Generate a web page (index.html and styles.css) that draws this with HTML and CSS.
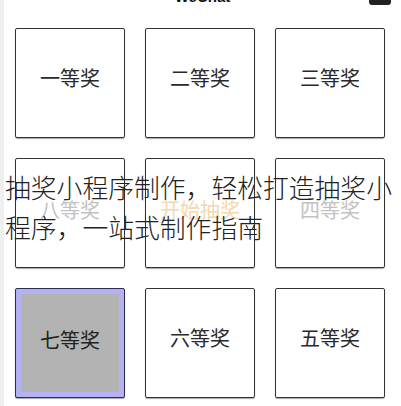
FILE: index.html
```html
<!DOCTYPE html>
<html lang="zh-CN">
<head>
    <meta charset="UTF-8">
    <meta name="viewport" content="width=device-width, initial-scale=1.0">
    <title>抽奖</title>
    <link rel="stylesheet" href="styles.css">
</head>
<body>
<div class="page">
    <div class="statusbar">
        <span class="title">WeChat</span>
        <span class="battery"></span>
    </div>

    <div class="grid">
        <div class="cell">一等奖</div>
        <div class="cell">二等奖</div>
        <div class="cell">三等奖</div>

        <div class="cell dim">八等奖</div>
        <div class="cell start">开始抽奖</div>
        <div class="cell dim">四等奖</div>

        <div class="cell active">七等奖</div>
        <div class="cell">六等奖</div>
        <div class="cell">五等奖</div>
    </div>

    <p class="banner">抽奖小程序制作，轻松打造抽奖小程序，一站式制作指南</p>
</div>
</body>
</html>
```

FILE: styles.css
```css
body{
    margin: 0;
    background-color: #fff;
    font-family: "Noto Sans CJK SC", "Noto Sans", sans-serif;
}
.page{
    position: relative;
    height: 406px;
    border-left: 4px solid #efefef;
    overflow: hidden;
}
.statusbar{
    height: 28px;
    display: flex;
    justify-content: center;
    position: relative;
}
.title{
    margin-top: -11px;
    font-family: "Liberation Sans", sans-serif;
    font-weight: bold;
    font-size: 15px;
    line-height: 15px;
    color: #111;
}
.battery{
    position: absolute;
    right: 10px;
    top: -5px;
    width: 22px;
    height: 10px;
    border-radius: 3px;
    background-color: #222;
}
.grid{
    display: grid;
    grid-template-columns: repeat(3, 110px);
    grid-auto-rows: 110px;
    gap: 20px;
    padding-left: 11px;
}
.cell{
    box-sizing: border-box;
    display: flex;
    align-items: center;
    justify-content: center;
    padding-bottom: 12px;
    border: 1px solid #333;
    border-radius: 2px;
    box-shadow: 0 1px 1px rgba(0, 0, 0, 0.35);
    font-size: 20px;
    color: #2a2a2a;
}
.cell.dim{
    color: #c2c2c2;
    padding-bottom: 8px;
}
.cell.start{
    color: #f2d9ad;
    padding-bottom: 8px;
}
.cell.active{
    background-color: #b3b3b3;
    border-color: #2c2c50;
    box-shadow: inset 0 0 0 5px #b4b2f2, 0 1px 1px rgba(0, 0, 0, 0.35);
    color: #222;
    padding-bottom: 8px;
}
/* 标题浮在九宫格上方 */
.banner{
    position: absolute;
    left: 1px;
    top: 167px;
    width: 394px;
    margin: 0;
    font-size: 25.8px;
    font-weight: 300;
    line-height: 40px;
    color: #222;
    text-spacing-trim: space-all;
}
```
